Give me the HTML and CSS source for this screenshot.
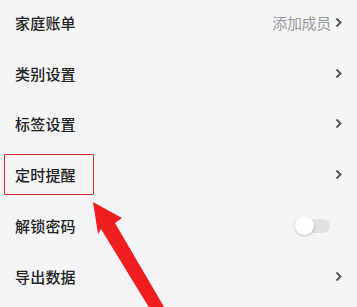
FILE: index.html
```html
<!DOCTYPE html>
<html lang="zh-CN">
<head>
    <meta charset="UTF-8">
    <title>设置</title>
    <link rel="stylesheet" href="styles.css">
</head>
<body>
    <div class="page">
        <ul class="menu">
            <li class="item">
                <span class="label">家庭账单</span>
                <span class="extra">添加成员</span>
                <svg class="arrow" width="7" height="11" viewBox="0 0 7 11"><path d="M1.5 1.5 L5.5 5.5 L1.5 9.5" fill="none" stroke="#555" stroke-width="2"/></svg>
            </li>
            <li class="item">
                <span class="label">类别设置</span>
                <svg class="arrow" width="7" height="11" viewBox="0 0 7 11"><path d="M1.5 1.5 L5.5 5.5 L1.5 9.5" fill="none" stroke="#555" stroke-width="2"/></svg>
            </li>
            <li class="item">
                <span class="label">标签设置</span>
                <svg class="arrow" width="7" height="11" viewBox="0 0 7 11"><path d="M1.5 1.5 L5.5 5.5 L1.5 9.5" fill="none" stroke="#555" stroke-width="2"/></svg>
            </li>
            <li class="item">
                <span class="label mark">定时提醒</span>
                <svg class="arrow" width="7" height="11" viewBox="0 0 7 11"><path d="M1.5 1.5 L5.5 5.5 L1.5 9.5" fill="none" stroke="#555" stroke-width="2"/></svg>
            </li>
            <li class="item">
                <span class="label">解锁密码</span>
                <span class="switch"><span class="knob"></span></span>
            </li>
            <li class="item">
                <span class="label">导出数据</span>
                <svg class="arrow" width="7" height="11" viewBox="0 0 7 11"><path d="M1.5 1.5 L5.5 5.5 L1.5 9.5" fill="none" stroke="#555" stroke-width="2"/></svg>
            </li>
        </ul>
        <!-- annotation arrow over the list -->
        <svg class="pointer" width="357" height="307" viewBox="0 0 357 307">
            <polygon points="93,202 122,218 115,223 167,312 153,314 101,229 98,234" fill="#f21d1d"/>
        </svg>
    </div>
</body>
</html>
```

FILE: styles.css
```css
body{
    margin:0;
    background:#f5f5f7;
    font-family:"Noto Sans CJK SC","Noto Sans",sans-serif;
}
.page{
    position:relative;
    width:357px;
    height:307px;
    overflow:hidden;
}
.menu{
    list-style:none;
    padding:0;
    margin:-3px 0 0 0;
}
.item{
    display:flex;
    align-items:center;
    height:50.8px;
    padding:0 15px 0 15px;
}
.label{
    flex:1;
    font-size:15px;
    font-weight:500;
    color:#222;
    letter-spacing:0.2px;
}
.mark{
    flex:none;
    margin-left:-11px;
    margin-right:auto;
    padding:9px 17px 9px 10px;
    border:1.5px solid #d8262b;
    border-radius:1px;
}
.extra{
    font-size:15px;
    color:#999;
    margin-right:4px;
    letter-spacing:-0.3px;
}
.arrow{
    display:block;
}
.switch{
    position:relative;
    width:32px;
    height:14px;
    margin-right:12px;
    border-radius:7px;
    background:#e2e2e4;
}
.knob{
    position:absolute;
    left:-3px;
    top:-3px;
    width:19px;
    height:19px;
    border-radius:50%;
    background:#fff;
    box-shadow:0 1px 3px rgba(0,0,0,0.22);
}
.pointer{
    position:absolute;
    left:0;
    top:0;
}
```
